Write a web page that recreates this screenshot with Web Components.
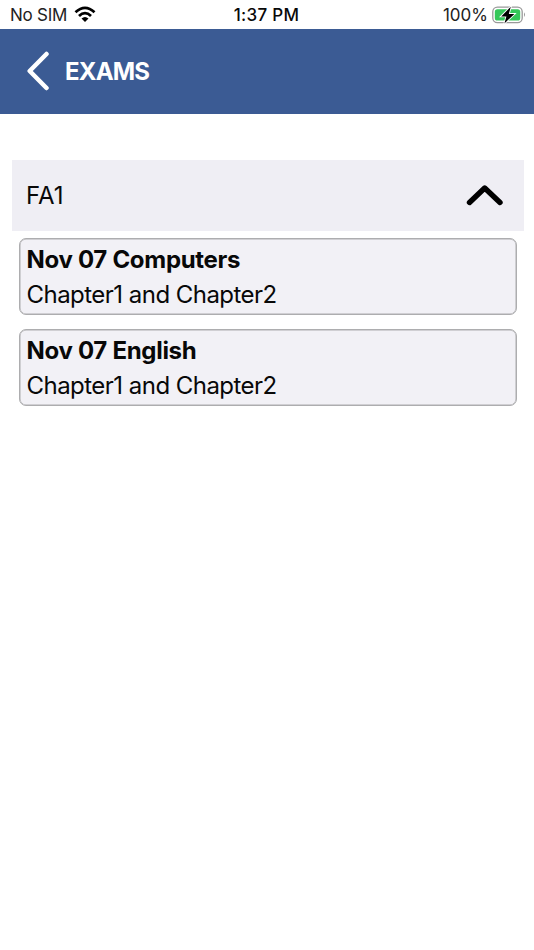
<!DOCTYPE html>
<html lang="en">
<head>
<meta charset="utf-8">
<title>Exams</title>
<style>
html,body{margin:0;height:100%;background:#fff}
body{font-family:Inter,"Liberation Sans",sans-serif;color:#080808}
</style>
</head>
<body>
<exams-screen></exams-screen>
<script>
const define = (name, markup) => {
  const template = document.createElement('template');
  template.innerHTML = markup;
  customElements.define(name, class extends HTMLElement {
    constructor() {
      super();
      this.attachShadow({ mode: 'open' }).append(template.content.cloneNode(true));
    }
  });
};

define('status-bar', `
<style>
:host{display:grid;grid-template-columns:1fr auto 1fr;align-items:center;height:29px;box-sizing:border-box;padding:1px 8px 0 10px;font-size:17px;line-height:28px;white-space:nowrap}
.left,.right{display:flex;align-items:center}
.left{gap:6.5px}.right{justify-content:flex-end;gap:4px}
.sim{letter-spacing:-.25px;color:#222}
.time{font-weight:550;letter-spacing:.3px;margin-right:3px}
.pct{letter-spacing:0;color:#222}
svg{display:block}
.wifi{margin-top:-2px}
.battery{margin-top:-1px}
</style>
<div class="left"><span class="sim">No SIM</span>
<svg class="wifi" width="22" height="17" viewBox="0 0 22 17"><g fill="none" stroke="#000" stroke-width="2.8"><path d="M1.5 6.2Q11-2.5 20.5 6.2"/><path d="M5 9.9Q11 4.3 17 9.9"/></g><path d="M7.5 12.5Q11 9.5 14.5 12.5L11 16Z"/></svg></div>
<span class="time">1:37 PM</span>
<div class="right"><span class="pct">100%</span>
<svg class="battery" width="34" height="18" viewBox="0 0 34 18"><rect x=".8" y="1.2" width="29.4" height="15.4" rx="4.6" fill="#fff" stroke="#999" stroke-width="1.3"/><rect x="2.8" y="3.2" width="25.4" height="11.4" rx="2.6" fill="#34c759"/><path d="M32 6.3Q34 8.7 32 11.1Z" fill="#999"/><path d="M18.8 .8L9.2 10.4H14.4L12.4 17.4L22.4 7.9H16.8Z" fill="#000" stroke="#fff" stroke-width="1.8" paint-order="stroke"/></svg></div>`);

define('nav-header', `
<style>
:host{display:flex;align-items:center;height:85px;box-sizing:border-box;padding-left:26px;gap:15px;background:#3b5b94;color:#fff;font-size:24px;font-weight:650;line-height:30px;letter-spacing:-.8px}
svg{display:block;margin-top:-1px}
</style>
<svg width="24" height="40" viewBox="0 0 24 40"><path d="M20.5 3L3.7 20L20.5 37" fill="none" stroke="#fff" stroke-width="4.5" stroke-linecap="round" stroke-linejoin="round"/></svg>
<span><slot></slot></span>`);

define('exam-group', `
<style>
:host{display:block}
header{display:flex;align-items:center;justify-content:space-between;height:71px;box-sizing:border-box;padding:0 20px 0 14px;background:#efeef4;font-size:24px;line-height:32px}
svg{display:block;margin-top:-1px}
.list{display:grid;gap:14px;padding:7px 7px 0}
</style>
<header><span><slot name="title"></slot></span>
<svg width="38" height="22" viewBox="0 0 38 22"><path d="M3.5 18.5L18.7 4L34 18.5" fill="none" stroke="#000" stroke-width="5.4" stroke-linecap="round" stroke-linejoin="round"/></svg></header>
<div class="list"><slot></slot></div>`);

define('exam-card', `
<style>
:host{display:block;height:77px;box-sizing:border-box;border:1px solid #adadaf;border-radius:7px;box-shadow:inset 0 0 0 .5px #adadaf;background:#f2f1f6;padding:3px 6.5px;font-size:24px;line-height:35px;white-space:nowrap}
.title{font-weight:700;letter-spacing:-.3px}
.text{letter-spacing:-.53px}
.title,.text{display:block}
</style>
<span class="title"><slot name="title"></slot></span>
<span class="text"><slot></slot></span>`);

define('exams-screen', `
<style>
:host{display:block;min-height:100%}
main{padding:46px 10px 0 12px}
</style>
<status-bar></status-bar>
<nav-header>EXAMS</nav-header>
<main><exam-group><span slot="title">FA1</span>
<exam-card><span slot="title">Nov 07 Computers</span>Chapter1 and Chapter2</exam-card>
<exam-card><span slot="title">Nov 07 English</span>Chapter1 and Chapter2</exam-card>
</exam-group></main>`);
</script>
</body>
</html>
